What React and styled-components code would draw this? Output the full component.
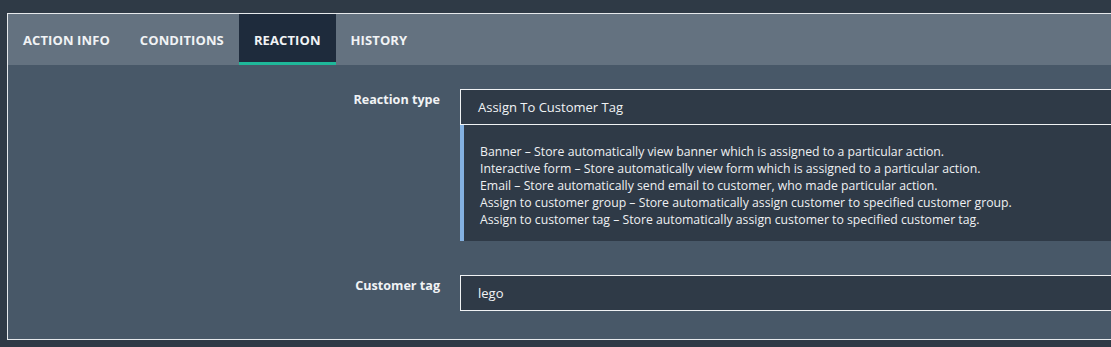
import styled, { createGlobalStyle } from "styled-components"

const GlobalStyle = createGlobalStyle`
	html, body {
		margin: 0;
		padding: 0;
		background: #2f3a46;
		overflow: hidden;
	}
	body {
		font-family: "Open Sans", "Noto Sans", sans-serif;
		color: #ffffff;
	}
`

const tabs = ["ACTION INFO", "CONDITIONS", "REACTION", "HISTORY"]

const descriptions = [
	"Banner – Store automatically view banner which is assigned to a particular action.",
	"Interactive form – Store automatically view form which is assigned to a particular action.",
	"Email – Store automatically send email to customer, who made particular action.",
	"Assign to customer group – Store automatically assign customer to specified customer group.",
	"Assign to customer tag – Store automatically assign customer to specified customer tag.",
]

function App() {
	return (
		<Page>
			<GlobalStyle />
			<Panel>
				<TabBar>
					{tabs.map((tab) => (
						<Tab key={tab} $active={tab === "REACTION"}>{tab}</Tab>
					))}
				</TabBar>
				<Content>
					<Row>
						<Label>Reaction type</Label>
						<Field>
							<Select>Assign To Customer Tag</Select>
							<Note>
								{descriptions.map((line) => (
									<div key={line}>{line}</div>
								))}
							</Note>
						</Field>
					</Row>
					<Row>
						<Label>Customer tag</Label>
						<Field>
							<Input>lego</Input>
						</Field>
					</Row>
				</Content>
			</Panel>
		</Page>
	)
}

export default App

const Page = styled.div`
	padding: 13px 0 0 7px;
	width: 1104px;
	overflow: hidden;
`

const Panel = styled.div`
	border: 1px solid #e6e9ec;
	border-right: none;
	background: #485868;
	width: 1200px;
`

const TabBar = styled.div`
	display: flex;
	background: #647280;
	height: 51px;
`

const Tab = styled.div`
	display: flex;
	align-items: center;
	padding: 3px 15px 0 15px;
	font-size: 13px;
	font-weight: 700;
	letter-spacing: 0.1px;
	color: #f1f3f5;
	box-sizing: border-box;
	background: ${(p) => (p.$active ? "#1e2b3c" : "transparent")};
	border-bottom: 3px solid ${(p) => (p.$active ? "#1fb89a" : "transparent")};
`

const Content = styled.div`
	display: flex;
	flex-direction: column;
	gap: 34px;
	padding: 24px 0 28px;
`

const Row = styled.div`
	display: grid;
	grid-template-columns: 432px 1fr;
	column-gap: 20px;
	align-items: start;
`

const Label = styled.div`
	text-align: right;
	font-size: 12.6px;
	font-weight: 700;
	color: #f1f3f5;
	padding-top: 2px;
`

const Field = styled.div`
	display: flex;
	flex-direction: column;
`

const Select = styled.div`
	height: 36px;
	box-sizing: border-box;
	border: 1px solid #f0f2f4;
	background: #2f3a47;
	padding: 0 17px;
	display: flex;
	align-items: center;
	font-size: 13px;
	color: #f1f3f5;
`

const Input = styled(Select)``

const Note = styled.div`
	background: #2f3a47;
	border-left: 4px solid #84b1e1;
	padding: 18px 16px 12px;
	font-size: 12.25px;
	line-height: 17px;
	color: #eef0f2;
	height: 116px;
	box-sizing: border-box;
`
